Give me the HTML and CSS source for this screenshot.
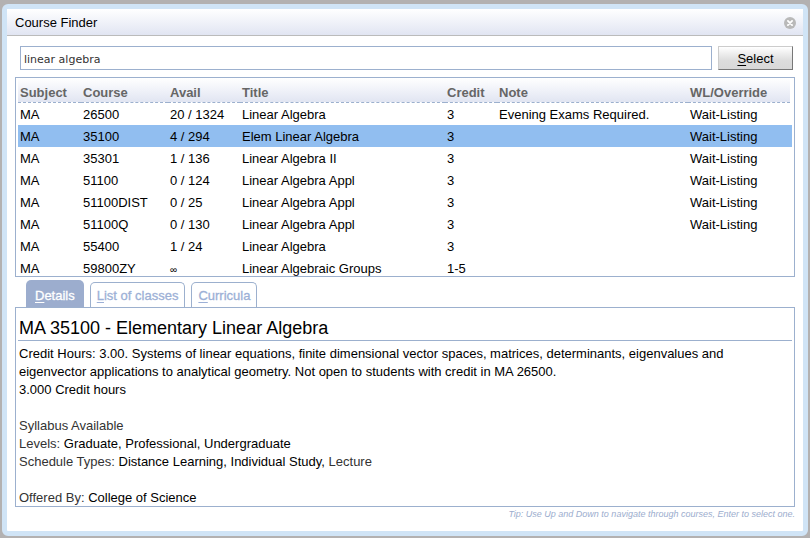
FILE: index.html
```html
<!DOCTYPE html>
<html lang="en">
<head>
<meta charset="utf-8">
<title>Course Finder</title>
<link rel="stylesheet" href="styles.css">
</head>
<body>
<main class="dialog" role="dialog" aria-labelledby="caption">
  <header class="caption">
    <h1 id="caption">Course Finder</h1>
    <button class="close" type="button" aria-label="Close">
      <svg viewBox="0 0 12 12" width="12" height="12"><circle cx="6" cy="6" r="6" fill="#b9b9b9"/><path d="M3.9 3.9l4.2 4.2M8.1 3.9L3.9 8.1" stroke="#fff" stroke-width="1.8" stroke-linecap="round"/></svg>
    </button>
  </header>
  <div class="content">
    <form class="search">
      <input type="text" value="linear algebra" aria-label="Course filter">
      <button type="button"><u>S</u>elect</button>
    </form>
    <div class="courses">
      <table>
        <colgroup><col class="subject"><col class="course"><col class="avail"><col class="title"><col class="credit"><col><col class="override"></colgroup>
        <thead>
          <tr><th><div>Subject</div></th><th><div>Course</div></th><th><div>Avail</div></th><th><div>Title</div></th><th><div>Credit</div></th><th><div>Note</div></th><th><div>WL/Override</div></th></tr>
        </thead>
        <tbody>
          <tr><td>MA</td><td>26500</td><td>20 / 1324</td><td>Linear Algebra</td><td>3</td><td>Evening Exams Required.</td><td>Wait-Listing</td></tr>
          <tr class="selected"><td>MA</td><td>35100</td><td>4 / 294</td><td>Elem Linear Algebra</td><td>3</td><td></td><td>Wait-Listing</td></tr>
          <tr><td>MA</td><td>35301</td><td>1 / 136</td><td>Linear Algebra II</td><td>3</td><td></td><td>Wait-Listing</td></tr>
          <tr><td>MA</td><td>51100</td><td>0 / 124</td><td>Linear Algebra Appl</td><td>3</td><td></td><td>Wait-Listing</td></tr>
          <tr><td>MA</td><td>51100DIST</td><td>0 / 25</td><td>Linear Algebra Appl</td><td>3</td><td></td><td>Wait-Listing</td></tr>
          <tr><td>MA</td><td>51100Q</td><td>0 / 130</td><td>Linear Algebra Appl</td><td>3</td><td></td><td>Wait-Listing</td></tr>
          <tr><td>MA</td><td>55400</td><td>1 / 24</td><td>Linear Algebra</td><td>3</td><td></td><td></td></tr>
          <tr><td>MA</td><td>59800ZY</td><td><span class="infinity">∞</span></td><td>Linear Algebraic Groups</td><td>1-5</td><td></td><td></td></tr>
        </tbody>
      </table>
    </div>
    <nav class="tabs">
      <a class="active" href="#details"><u>D</u>etails</a>
      <a href="#classes"><u>L</u>ist of classes</a>
      <a href="#curricula"><u>C</u>urricula</a>
    </nav>
    <section class="details" id="details">
      <h2>MA 35100 - Elementary Linear Algebra</h2>
      <p>Credit Hours: 3.00. Systems of linear equations, finite dimensional vector spaces, matrices, determinants, eigenvalues and eigenvector applications to analytical geometry. Not open to students with credit in MA 26500.<br>3.000 Credit hours</p>
      <p><span class="label">Syllabus Available</span><br><span class="label">Levels:</span> Graduate, Professional, Undergraduate<br><span class="label">Schedule Types:</span> Distance Learning, Individual Study, <span class="label">Lecture</span></p>
      <p><span class="label">Offered By:</span> College of Science</p>
    </section>
    <p class="tip">Tip: Use Up and Down to navigate through courses, Enter to select one.</p>
  </div>
</main>
</body>
</html>
```

FILE: styles.css
```css
* {
  box-sizing: border-box;
}

body {
  margin: 0;
  padding: 4px 2px 2px;
  min-height: 100vh;
  display: flex;
  background: #b3b1b1;
  color: #000;
  font: 13px/18px "Liberation Sans", Arial, sans-serif;
}

.dialog {
  flex: 1;
  min-width: 0;
  border: 5px solid #d0e4f6;
  border-radius: 6px;
  background: #fff;
}

.caption {
  display: flex;
  justify-content: space-between;
  align-items: center;
  height: 27px;
  padding: 2px 7px 0 8px;
  border-bottom: 1px solid #bbb;
  background: linear-gradient(#fff, #e1e5f2);
}

.caption h1 {
  margin: 0;
  font-size: 13px;
  font-weight: normal;
}

.close {
  display: flex;
  padding: 0;
  border: 0;
  background: none;
}

.content {
  padding: 10px 8px 0;
}

.search {
  display: flex;
  gap: 6px;
  padding: 0 2px 7px 5px;
}

.search input {
  flex: 1;
  min-width: 0;
  height: 24px;
  padding: 2px 3px 0;
  border: 1px solid #9cb0ce;
  color: #333;
  font: 11px "DejaVu Sans", Verdana, sans-serif;
}

.search button {
  width: 75px;
  height: 24px;
  padding: 2px 0 0;
  border: 1px solid;
  border-color: #ccc #777 #777 #ccc;
  background: linear-gradient(#fff, #ddd 60%, #d8d8d8);
  color: #000;
  font: inherit;
}

u {
  text-underline-offset: 2px;
}

.courses {
  height: 200px;
  padding: 0 2px;
  border: 1px solid #9cb0ce;
  overflow: hidden;
}

table {
  width: 100%;
  table-layout: fixed;
  border-collapse: collapse;
}

.subject { width: 63px; }
.course { width: 87px; }
.avail { width: 72px; }
.title { width: 205px; }
.credit { width: 52px; }
.override { width: 104px; }

th {
  padding: 0;
  color: #666;
  text-align: left;
}

th div {
  height: 25px;
  padding: 6px 2px 0;
  border-bottom: 1px dashed #9cb0ce;
  background: linear-gradient(#fff, #e1e5f2);
}

th:last-child div {
  margin-right: 2px;
}

td {
  height: 22px;
  padding: 3px 2px 1px;
  white-space: nowrap;
}

.selected {
  background: #91bef0;
}

.infinity {
  font-size: 10px;
  line-height: 1;
}

.tabs {
  display: flex;
  align-items: flex-end;
  gap: 6px;
  height: 30px;
  padding: 0 11px;
}

.tabs a {
  height: 25px;
  padding: 4px 6px 0;
  border: 1px solid #9cb0ce;
  border-bottom: 0;
  border-radius: 5px 5px 0 0;
  color: #9cb0d6;
  text-decoration: none;
  -webkit-text-stroke: 0.3px;
}

.tabs .active {
  height: 27px;
  padding: 7px 9px 0;
  border: 0;
  background: #9cadce;
  color: #fff;
}

.details {
  height: 200px;
  padding: 9px 2px 0;
  border: 1px solid #9cb0ce;
  overflow: hidden;
}

.details h2 {
  margin: 0 0 4px;
  padding: 0 1px;
  border-bottom: 1px solid #9cb0ce;
  font-size: 18px;
  font-weight: normal;
  line-height: 23px;
}

.details p {
  margin: 0 0 18px;
  padding: 0 1px;
}

.label {
  color: #333;
}

.tip {
  margin: 0;
  color: #9cadce;
  font-size: 9px;
  font-style: italic;
  line-height: 14px;
  text-align: right;
}
```
